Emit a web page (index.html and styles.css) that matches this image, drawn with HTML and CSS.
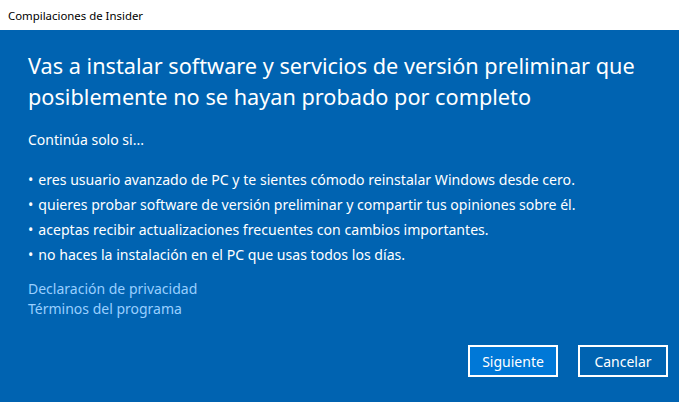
FILE: index.html
```html
<!DOCTYPE html>
<html lang="es">
<head>
  <meta charset="UTF-8" />
  <title>Compilaciones de Insider</title>
  <link rel="stylesheet" href="styles.css">
</head>
<body>

<!-- Title bar -->
<div class="titlebar">Compilaciones de Insider</div>

<!-- Dialog body -->
<div class="dialog">
  <h1 class="heading">Vas a instalar software y servicios de versión preliminar que posiblemente no se hayan probado por completo</h1>

  <p class="intro">Continúa solo si...</p>

  <ul class="conditions">
    <li>eres usuario avanzado de PC y te sientes cómodo reinstalar Windows desde cero.</li>
    <li>quieres probar software de versión preliminar y compartir tus opiniones sobre él.</li>
    <li>aceptas recibir actualizaciones frecuentes con cambios importantes.</li>
    <li>no haces la instalación en el PC que usas todos los días.</li>
  </ul>

  <div class="links">
    <a href="#">Declaración de privacidad</a>
    <a href="#">Términos del programa</a>
  </div>

  <div class="actions">
    <button class="btn btn-primary">Siguiente</button>
    <button class="btn">Cancelar</button>
  </div>
</div>

</body>
</html>
```

FILE: styles.css
```css
html, body {
  height: 100%;
}

body {
  margin: 0;
  display: flex;
  flex-direction: column;
  font-family: "Noto Sans", "Open Sans", sans-serif;
  background: #0063b1;
  color: #fff;
  overflow: hidden;
}

.titlebar {
  height: 30px;
  flex: none;
  display: flex;
  align-items: center;
  padding-left: 8px;
  background: #fff;
  color: #000;
  font-size: 11.4px;
}

.dialog {
  flex: 1;
  display: flex;
  flex-direction: column;
  padding: 20px 11px 0 28px;
}

.heading {
  margin: 0;
  max-width: 620px;
  font-size: 21.7px;
  font-weight: 400;
  line-height: 31px;
}

.intro {
  margin: 18px 0 0;
  font-size: 14px;
  line-height: 20px;
}

.conditions {
  list-style: none;
  margin: 17px 0 0;
  padding: 0;
  font-size: 14.1px;
  line-height: 25px;
}

.conditions li::before {
  content: "\2022";
  margin-right: 5px;
}

.links {
  display: flex;
  flex-direction: column;
  margin-top: 12px;
  font-size: 14px;
  line-height: 20px;
}

.links a {
  color: #99cfff;
  text-decoration: none;
}

.actions {
  display: flex;
  justify-content: flex-end;
  gap: 20px;
  margin-top: 26px;
}

.btn {
  width: 90px;
  height: 32px;
  padding: 0;
  border: 2px solid #fff;
  background: #0063b1;
  color: #fff;
  font-family: inherit;
  font-size: 14px;
  cursor: pointer;
}

.btn-primary {
  background: #0078d7;
}
```
